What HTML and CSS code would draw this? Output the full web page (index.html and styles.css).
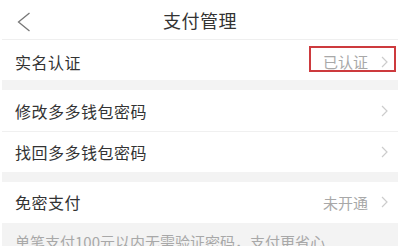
FILE: index.html
```html
<!DOCTYPE html>
<html lang="zh-CN">
<head>
<meta charset="utf-8">
<title>支付管理</title>
<link rel="stylesheet" href="styles.css">
</head>
<body>
<div class="page">
  <header class="nav">
    <svg class="back" width="14" height="20" viewBox="0 0 14 20"><polyline points="12.5,1 1.5,10 12.5,19" fill="none" stroke="#777" stroke-width="1.3"/></svg>
    <div class="title">支付管理</div>
  </header>
  <div class="group">
    <div class="row row-first">
      <span class="label">实名认证</span>
      <span class="value">已认证<svg class="chev" width="7" height="12" viewBox="0 0 7 12"><polyline points="1,1 6,6 1,11" fill="none" stroke="#ccc" stroke-width="1.2"/></svg></span>
      <div class="mark"></div>
    </div>
  </div>
  <div class="gap"></div>
  <div class="group">
    <div class="row row-line">
      <span class="label">修改多多钱包密码</span>
      <span class="value"><svg class="chev" width="7" height="12" viewBox="0 0 7 12"><polyline points="1,1 6,6 1,11" fill="none" stroke="#ccc" stroke-width="1.2"/></svg></span>
    </div>
    <div class="row">
      <span class="label">找回多多钱包密码</span>
      <span class="value"><svg class="chev" width="7" height="12" viewBox="0 0 7 12"><polyline points="1,1 6,6 1,11" fill="none" stroke="#ccc" stroke-width="1.2"/></svg></span>
    </div>
  </div>
  <div class="gap"></div>
  <div class="group">
    <div class="row">
      <span class="label">免密支付</span>
      <span class="value">未开通<svg class="chev" width="7" height="12" viewBox="0 0 7 12"><polyline points="1,1 6,6 1,11" fill="none" stroke="#ccc" stroke-width="1.2"/></svg></span>
    </div>
  </div>
  <div class="note">单笔支付100元以内无需验证密码，支付更省心</div>
</div>
</body>
</html>
```
FILE: styles.css
```css
html, body {
  margin: 0;
  padding: 0;
  background: #fff;
}
body {
  width: 404px;
  height: 246px;
  overflow: hidden;
  font-family: "Noto Sans CJK SC", "Noto Sans", sans-serif;
  color: #333;
}
.page {
  margin: 0 6px 0 2px;
}
.nav {
  height: 39px;
  border-bottom: 1px solid #efefef;
  display: flex;
  align-items: center;
  justify-content: center;
  position: relative;
}
.back {
  position: absolute;
  left: 15px;
  top: 12px;
}
.title {
  font-size: 18px;
  color: #333;
  letter-spacing: 0.5px;
  line-height: 1;
  padding-top: 1px;
}
.row {
  height: 40px;
  display: flex;
  align-items: center;
  justify-content: space-between;
  padding: 0 10px 0 13px;
  position: relative;
}
.row-first {
  height: 40px;
  padding-top: 3px;
  box-sizing: border-box;
}
.row-line {
  border-bottom: 1px solid #f0f0f0;
  height: 41px;
}
.label {
  font-size: 16px;
  letter-spacing: 0.5px;
  color: #333;
  line-height: 1;
}
.value {
  display: flex;
  align-items: center;
  font-size: 15px;
  color: #a8a8a8;
  line-height: 1;
}
.chev {
  margin-left: 13px;
}
.gap {
  height: 10px;
  background: #f3f3f3;
}
.mark {
  position: absolute;
  left: 307px;
  top: 6px;
  width: 83px;
  height: 22px;
  border: 2px solid #cd3a3e;
}
.note {
  background: #f3f3f3;
  height: 40px;
  padding: 10px 0 0 13px;
  box-sizing: border-box;
  font-size: 15px;
  color: #a8a8a8;
  line-height: 1.2;
  margin-top: 1px;
}
```
